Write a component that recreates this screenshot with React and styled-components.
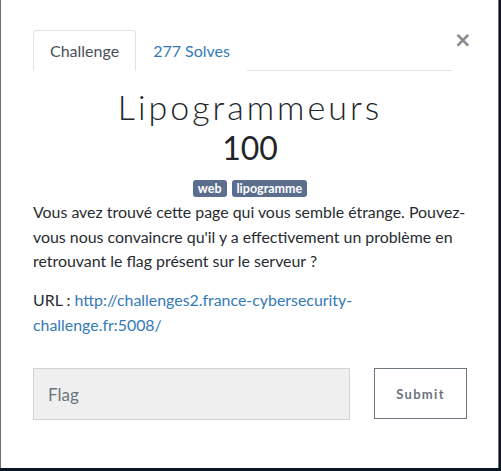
import React, { useState } from 'react';
import styled, { createGlobalStyle } from 'styled-components';

const Global = createGlobalStyle`
  html, body { margin: 0; padding: 0; background: #0b1422; }
  body { font-family: Lato, "Open Sans", sans-serif; overflow: hidden; }
  * { box-sizing: border-box; }
`;

const Backdrop = styled.div`
  width: 501px; height: 471px;
  background: #0b1422;
  display: flex; align-items: flex-start;
`;
const Modal = styled.div`
  width: 499px; height: 468px;
  background: #fff;
  border-left: 1px solid #6f6f6f;
  border-right: 1px solid #6f6f6f;
  padding: 30px 31px 0 32px;
  display: flex; flex-direction: column;
`;
const Header = styled.div`display: flex; align-items: flex-start;`;
const Tabs = styled.ul`
  flex: 1; display: flex; margin: 0; padding: 0; list-style: none;
  border-bottom: 1px solid #dee2e6;
`;
const Tab = styled.li`
  height: 41px; margin-bottom: -1px;
  padding: 0 16px;
  display: flex; align-items: center;
  font-size: 16px;
  color: ${({ $active }) => ($active ? '#495057' : '#337ab7')};
  background: #fff;
  border: 1px solid ${({ $active }) => ($active ? '#dee2e6' : 'transparent')};
  border-bottom-color: ${({ $active }) => ($active ? '#fff' : 'transparent')};
  border-radius: 4px 4px 0 0;
  cursor: pointer;
`;
const Close = styled.button`
  border: none; background: none; padding: 0; margin: 2px 1px 0 2px;
  width: 12px; height: 16px;
  font-family: "DejaVu Sans", sans-serif;
  font-size: 21px; font-weight: 700; line-height: 16px;
  color: #8a8a8a; cursor: pointer;
`;
const Title = styled.h1`
  margin: 16px 0 0; text-align: center;
  font-weight: 300; font-size: 34px; letter-spacing: 3px; line-height: 40px;
  color: #212529;
`;
const Points = styled.h2`
  margin: 0; text-align: center;
  font-weight: 400; font-size: 32px; line-height: 42px;
  color: #212529;
`;
const Tags = styled.div`
  display: flex; justify-content: center; gap: 5px; margin-top: 11px;
`;
const Tag = styled.span`
  background: #5b6e8d; color: #fff;
  font-size: 12.5px; font-weight: 700; line-height: 17px;
  padding: 0 5px; border-radius: 3px;
`;
const Description = styled.p`
  margin: 3px -3px 0 0; font-size: 15.9px; line-height: 24.5px; color: #272b30;
`;
const UrlLine = styled(Description)`margin-top: 14.5px;`;
const Link = styled.a`color: #337ab7; text-decoration: none;`;
const FormRow = styled.form`
  display: flex; gap: 24px; margin-top: 31px;
`;
const FlagInput = styled.input`
  width: 317px; height: 52px;
  background: #efefef; border: 1px solid #d0d5da;
  padding: 0 14px; font-family: Lato, sans-serif; font-size: 17px; color: #495057;
  outline: none;
  &::placeholder { color: #6c757d; }
`;
const SubmitButton = styled.button`
  width: 93px; height: 51px;
  background: #fff; border: 1px solid #6c757d;
  font-family: Lato, sans-serif; font-size: 13px; font-weight: 700; letter-spacing: 1.3px;
  color: #6c757d; cursor: pointer;
`;

export default function App() {
  const [tab, setTab] = useState('challenge');
  const [flag, setFlag] = useState('');
  return (
    <>
      <Global />
      <Backdrop>
        <Modal>
          <Header>
            <Tabs>
              <Tab $active={tab === 'challenge'} onClick={() => setTab('challenge')}>Challenge</Tab>
              <Tab $active={tab === 'solves'} onClick={() => setTab('solves')}>277 Solves</Tab>
            </Tabs>
            <Close aria-label="Close">×</Close>
          </Header>
          <Title>Lipogrammeurs</Title>
          <Points>100</Points>
          <Tags>
            <Tag>web</Tag>
            <Tag>lipogramme</Tag>
          </Tags>
          <Description>
            Vous avez trouvé cette page qui vous semble étrange. Pouvez-vous nous convaincre qu'il y a effectivement un problème en retrouvant le flag présent sur le serveur ?
          </Description>
          <UrlLine>
            URL : <Link href="#">http://challenges2.france-cybersecurity-challenge.fr:5008/</Link>
          </UrlLine>
          <FormRow onSubmit={(e) => e.preventDefault()}>
            <FlagInput placeholder="Flag" value={flag} onChange={(e) => setFlag(e.target.value)} />
            <SubmitButton type="submit">Submit</SubmitButton>
          </FormRow>
        </Modal>
      </Backdrop>
    </>
  );
}
